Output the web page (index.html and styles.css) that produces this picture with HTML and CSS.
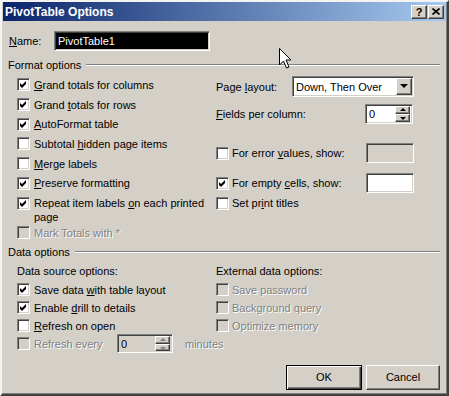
FILE: index.html
```html
<!DOCTYPE html>
<html lang="en">
<head>
    <meta charset="UTF-8">
    <meta name="viewport" content="width=device-width, initial-scale=1.0">
    <title>PivotTable Options</title>
    <link rel="stylesheet" href="styles.css">
</head>
<body>
<div class="window">
    <div class="titlebar">
        <span class="title">PivotTable Options</span>
        <div class="caption-buttons">
            <span class="cap-btn raised">?</span>
            <span class="cap-btn raised">
                <svg width="8" height="7" viewBox="0 0 8 7"><path d="M0.5 0.5 L7.5 6.5 M7.5 0.5 L0.5 6.5" stroke="#000" stroke-width="1.6"/></svg>
            </span>
        </div>
    </div>

    <div class="content">
        <div class="name-row">
            <label class="name-label"><u>N</u>ame:</label>
            <div class="field name-field sunken">PivotTable1</div>
        </div>

        <div class="group-head format-head"><span>Format options</span><div class="rule"></div></div>
        <div class="columns format">
            <div class="col-left">
                <div class="row"><span class="check sunken"><svg width="11" height="11" viewBox="0 0 11 11"><path d="M2 4 L4 6 L8 2 L8 5 L4 9 L2 7 Z"/></svg></span><span><u>G</u>rand totals for columns</span></div>
                <div class="row"><span class="check sunken"><svg width="11" height="11" viewBox="0 0 11 11"><path d="M2 4 L4 6 L8 2 L8 5 L4 9 L2 7 Z"/></svg></span><span>Grand <u>t</u>otals for rows</span></div>
                <div class="row"><span class="check sunken"><svg width="11" height="11" viewBox="0 0 11 11"><path d="M2 4 L4 6 L8 2 L8 5 L4 9 L2 7 Z"/></svg></span><span><u>A</u>utoFormat table</span></div>
                <div class="row"><span class="check sunken"></span><span>Subtotal <u>h</u>idden page items</span></div>
                <div class="row"><span class="check sunken"></span><span><u>M</u>erge labels</span></div>
                <div class="row"><span class="check sunken"><svg width="11" height="11" viewBox="0 0 11 11"><path d="M2 4 L4 6 L8 2 L8 5 L4 9 L2 7 Z"/></svg></span><span><u>P</u>reserve formatting</span></div>
                <div class="row wrap"><span class="check sunken"><svg width="11" height="11" viewBox="0 0 11 11"><path d="M2 4 L4 6 L8 2 L8 5 L4 9 L2 7 Z"/></svg></span><span>Repeat item labels <u>o</u>n each printed<br>page</span></div>
                <div class="row disabled"><span class="check sunken off"></span><span>Mark Totals with *</span></div>
            </div>
            <div class="col-right">
                <div class="row page-row">
                    <span class="page-label">Page <u>l</u>ayout:</span>
                    <div class="select sunken">
                        <span>Down, Then Over</span>
                        <span class="drop raised"></span>
                    </div>
                </div>
                <div class="row fields-row">
                    <span class="fields-label"><u>F</u>ields per column:</span>
                    <div class="spin sunken">
                        <span>0</span>
                        <span class="arrows"><span class="arrow up raised"></span><span class="arrow down raised"></span></span>
                    </div>
                </div>
                <div class="row err-row">
                    <span class="check sunken"></span>
                    <span class="show-label">For error <u>v</u>alues, show:</span>
                    <div class="small-field sunken off"></div>
                </div>
                <div class="row empty-row">
                    <span class="check sunken"><svg width="11" height="11" viewBox="0 0 11 11"><path d="M2 4 L4 6 L8 2 L8 5 L4 9 L2 7 Z"/></svg></span>
                    <span class="show-label">For empty <u>c</u>ells, show:</span>
                    <div class="small-field sunken"></div>
                </div>
                <div class="row titles-row">
                    <span class="check sunken"></span>
                    <span>Set pr<u>i</u>nt titles</span>
                </div>
            </div>
        </div>

        <div class="group-head data-head"><span>Data options</span><div class="rule"></div></div>
        <div class="columns data">
            <div class="col-left">
                <div class="sub">Data source options:</div>
                <div class="row"><span class="check sunken"><svg width="11" height="11" viewBox="0 0 11 11"><path d="M2 4 L4 6 L8 2 L8 5 L4 9 L2 7 Z"/></svg></span><span>Save data <u>w</u>ith table layout</span></div>
                <div class="row"><span class="check sunken"><svg width="11" height="11" viewBox="0 0 11 11"><path d="M2 4 L4 6 L8 2 L8 5 L4 9 L2 7 Z"/></svg></span><span>Enable <u>d</u>rill to details</span></div>
                <div class="row"><span class="check sunken"></span><span><u>R</u>efresh on open</span></div>
                <div class="row disabled">
                    <span class="check sunken off"></span>
                    <span class="every-label">Refresh every</span>
                    <div class="spin every-spin sunken off">
                        <span>0</span>
                        <span class="arrows"><span class="arrow up raised"></span><span class="arrow down raised"></span></span>
                    </div>
                    <span class="minutes">minutes</span>
                </div>
            </div>
            <div class="col-right">
                <div class="sub">External data options:</div>
                <div class="row disabled"><span class="check sunken off"></span><span>Save password</span></div>
                <div class="row disabled"><span class="check sunken off"></span><span>Background query</span></div>
                <div class="row disabled"><span class="check sunken off"></span><span>Optimize memory</span></div>
            </div>
        </div>

        <div class="actions">
            <button class="btn default">OK</button>
            <button class="btn cancel raised">Cancel</button>
        </div>
    </div>

    <svg class="cursor" width="13" height="21" viewBox="0 0 13 21">
        <path d="M0.5 0.5 L0.5 17 L4.5 13 L7.5 20 L10 19 L7 12 L12 12 Z" fill="#fff" stroke="#000" stroke-width="1"/>
    </svg>
</div>
</body>
</html>
```

FILE: styles.css
```css
body {
    margin: 0;
    font-family: "Liberation Sans", Arial, sans-serif;
    font-size: 11px;
    color: #000;
    background-color: #d4d0c8;
}
.window {
    position: relative;
    box-sizing: border-box;
    width: 449px;
    height: 396px;
    background-color: #d4d0c8;
    border: 2px solid;
    border-color: #f4f4f4 #404040 #404040 #f4f4f4;
    box-shadow: inset -1px -1px #808080;
}
.raised {
    box-sizing: border-box;
    background-color: #d4d0c8;
    border: 1px solid;
    border-color: #fff #404040 #404040 #fff;
    box-shadow: inset -1px -1px #808080;
}
.sunken {
    box-sizing: border-box;
    background-color: #fff;
    border: 1px solid;
    border-color: #808080 #fff #fff #808080;
    box-shadow: inset 1px 1px #404040, inset -1px -1px #d4d0c8;
}
.sunken.off {
    background-color: #d4d0c8;
}

/* title bar */
.titlebar {
    display: flex;
    align-items: center;
    justify-content: space-between;
    height: 19px;
    margin: 0 1px;
    background: linear-gradient(to right, #0a246a, #a6caf0);
}
.title {
    margin-left: 2px;
    color: #fff;
    font-weight: bold;
    font-size: 12px;
}
.caption-buttons {
    display: flex;
    gap: 1px;
    margin-right: 2px;
}
.cap-btn {
    display: flex;
    align-items: center;
    justify-content: center;
    width: 16px;
    height: 14px;
    font-weight: bold;
    font-size: 11px;
}

.content {
    padding: 0 7px 0 6px;
}

/* name */
.name-row {
    display: flex;
    align-items: center;
    height: 21px;
    margin-top: 9px;
    padding-left: 1px;
}
.name-label {
    width: 45px;
}
.name-field {
    width: 156px;
    height: 20px;
    padding: 3px 0 0 3px;
    background-color: #000;
    color: #fff;
}

/* groups */
.group-head {
    display: flex;
    align-items: center;
    height: 14px;
}
.format-head {
    margin-top: 7px;
}
.data-head {
    margin-top: 2px;
}
.rule {
    flex: 1;
    margin-left: 5px;
    border-top: 1px solid #808080;
    border-bottom: 1px solid #fff;
}
.columns {
    display: flex;
}
.format {
    margin-top: 3px;
}
.col-left {
    width: 199px;
    margin-left: 9px;
}
.col-right {
    flex: 1;
}

.row {
    display: flex;
    align-items: center;
    height: 19.7px;
    white-space: nowrap;
}
.row > * {
    flex: none;
}
.row.wrap {
    box-sizing: border-box;
    align-items: flex-start;
    height: 30px;
    padding-top: 3px;
    line-height: 14px;
}
.row.wrap .check {
    margin-top: 1px;
}
.check {
    display: flex;
    width: 13px;
    height: 13px;
    margin-right: 4px;
}
.col-right .check {
    margin-right: 3px;
}
.disabled {
    color: #808080;
    text-shadow: 1px 1px 0 #fff;
}

/* right column controls */
.page-row {
    height: 21px;
    margin-top: 1px;
}
.page-label {
    width: 76px;
}
.select {
    display: flex;
    align-items: center;
    width: 122px;
    height: 21px;
    padding-left: 3px;
}
.drop {
    position: relative;
    width: 16px;
    height: 17px;
    margin-left: auto;
    margin-right: 1px;
}
.drop::after {
    content: "";
    position: absolute;
    left: 3px;
    top: 5px;
    border-left: 4px solid transparent;
    border-right: 4px solid transparent;
    border-top: 4px solid #000;
}
.fields-row {
    height: 20px;
    margin-top: 7px;
}
.fields-label {
    width: 149px;
}
.spin {
    display: flex;
    align-items: center;
    width: 48px;
    height: 20px;
    padding-left: 3px;
}
.arrows {
    display: flex;
    flex-direction: column;
    width: 15px;
    height: 16px;
    margin-left: auto;
    margin-right: 2px;
}
.arrow {
    position: relative;
    height: 8px;
}
.arrow::after {
    content: "";
    position: absolute;
    left: 4px;
    border-left: 3px solid transparent;
    border-right: 3px solid transparent;
}
.arrow.up::after {
    top: 1px;
    border-bottom: 3px solid #000;
}
.arrow.down::after {
    top: 2px;
    border-top: 3px solid #000;
}
.off .arrow.up::after {
    border-bottom-color: #808080;
}
.off .arrow.down::after {
    border-top-color: #808080;
}
.err-row {
    height: 20px;
    margin-top: 19px;
}
.empty-row {
    height: 20px;
    margin-top: 10px;
}
.titles-row {
    height: 20px;
}
.show-label {
    width: 134px;
}
.small-field {
    width: 48px;
    height: 20px;
}

/* data options */
.sub {
    height: 14px;
    line-height: 14px;
    margin: 5px 0 3px;
}
.data .row {
    height: 18px;
}
.every-label {
    width: 83px;
}
.every-spin {
    width: 56px;
    height: 19px;
    color: #000;
    text-shadow: none;
}
.every-spin .arrows {
    height: 15px;
}
.every-spin .arrow {
    height: 7.5px;
}
.minutes {
    margin-left: 12px;
}

/* buttons */
.actions {
    display: flex;
    justify-content: flex-end;
    gap: 4px;
    margin-top: 12px;
}
.btn {
    width: 76px;
    height: 25px;
    padding: 0;
    font-family: "Liberation Sans", Arial, sans-serif;
    font-size: 11px;
    color: #000;
}
.btn.default {
    box-sizing: border-box;
    background-color: #d4d0c8;
    border: 1px solid #000;
    box-shadow: inset 1px 1px #fff, inset -1px -1px #404040, inset -2px -2px #808080;
}
.btn.cancel {
    width: 74px;
}

.cursor {
    position: absolute;
    left: 277px;
    top: 46px;
}
```
